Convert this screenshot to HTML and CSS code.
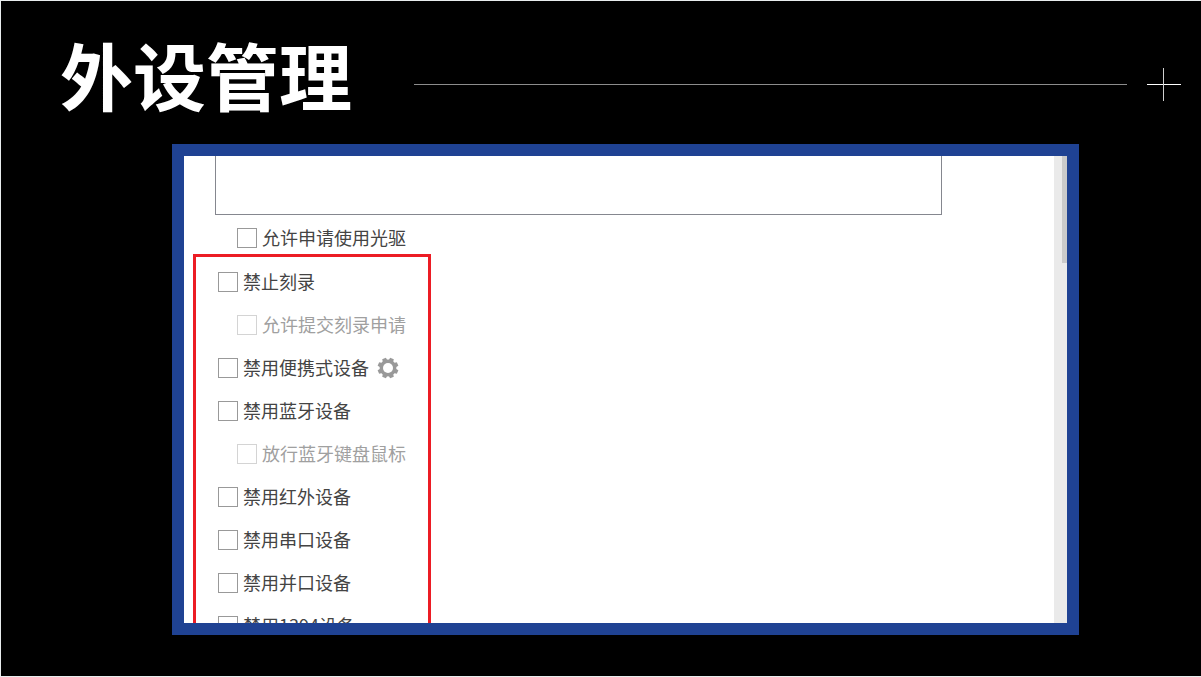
FILE: index.html
```html
<!DOCTYPE html>
<html lang="zh-CN">
<head>
  <meta charset="UTF-8" />
  <meta name="viewport" content="width=device-width, initial-scale=1.0"/>
  <title>外设管理</title>
  <link rel="stylesheet" href="styles.css">
</head>
<body>

  <header class="header">
    <h1>外设管理</h1>
    <div class="line"></div>
    <svg class="plus" viewBox="0 0 34 34" aria-hidden="true">
      <path d="M0 17.5H34" stroke="#fff"/>
      <path d="M16.5 1V34" stroke="#d0d0d0"/>
    </svg>
  </header>

  <main class="panel">
    <form class="settings">
      <textarea class="list-box" aria-label="列表"></textarea>

      <label class="option sub outside">
        <input type="checkbox"><span>允许申请使用光驱</span>
      </label>

      <div class="marked">
        <label class="option"><input type="checkbox"><span>禁止刻录</span></label>
        <label class="option sub"><input type="checkbox" disabled><span>允许提交刻录申请</span></label>
        <div class="option">
          <label class="option"><input type="checkbox"><span>禁用便携式设备</span></label>
          <button type="button" class="gear" aria-label="设置">
            <svg viewBox="0 0 22 22">
              <g fill="#999">
                <path d="M8.4 5 9 .6H13L13.6 5V17L13 21.4H9L8.4 17Z" transform="rotate(22.5 11 11)"/>
                <path d="M8.4 5 9 .6H13L13.6 5V17L13 21.4H9L8.4 17Z" transform="rotate(67.5 11 11)"/>
                <path d="M8.4 5 9 .6H13L13.6 5V17L13 21.4H9L8.4 17Z" transform="rotate(112.5 11 11)"/>
                <path d="M8.4 5 9 .6H13L13.6 5V17L13 21.4H9L8.4 17Z" transform="rotate(157.5 11 11)"/>
                <circle cx="11" cy="11" r="8.4"/>
              </g>
              <circle cx="11" cy="11" r="5" fill="#fff"/>
            </svg>
          </button>
        </div>
        <label class="option"><input type="checkbox"><span>禁用蓝牙设备</span></label>
        <label class="option sub"><input type="checkbox" disabled><span>放行蓝牙键盘鼠标</span></label>
        <label class="option"><input type="checkbox"><span>禁用红外设备</span></label>
        <label class="option"><input type="checkbox"><span>禁用串口设备</span></label>
        <label class="option"><input type="checkbox"><span>禁用并口设备</span></label>
        <label class="option"><input type="checkbox"><span>禁用1394设备</span></label>
      </div>
    </form>
    <div class="scrollbar"><div class="thumb"></div></div>
  </main>

</body>
</html>
```
FILE: styles.css
```css
* {
  box-sizing: border-box;
}
body {
  display: flex;
  flex-direction: column;
  height: 100vh;
  margin: 0;
  border: 1px solid #e8eced;
  border-right: none;
  background: #000;
  font-family: "Noto Sans CJK SC", sans-serif;
}
.header {
  display: flex;
  align-items: center;
  height: 143px;
  padding: 23px 20px 0 59px;
  flex-shrink: 0;
}
.header h1 {
  margin: 0 62px 22px 0;
  color: #fff;
  font-size: 73px;
  line-height: 80px;
}
.line {
  flex: 1;
  height: 1px;
  background: #8c8c8c;
}
.plus {
  width: 34px;
  height: 34px;
  margin-left: 20px;
}
.panel {
  display: flex;
  flex: 1;
  min-height: 0;
  margin: 0 122px 41px 171px;
  border: 12px solid #1f4293;
  background: #fff;
  overflow: hidden;
}
.settings {
  display: flex;
  flex: 1;
  flex-direction: column;
  align-items: flex-start;
  overflow: hidden;
}
.list-box {
  align-self: stretch;
  flex-shrink: 0;
  height: 59px;
  margin: 0 112px 0 31px;
  border: 1px solid #85878f;
  border-top: none;
  resize: none;
}
.option {
  display: flex;
  align-items: center;
  height: 20px;
  flex-shrink: 0;
  gap: 5px;
  color: #444;
  font-size: 18px;
  line-height: 20px;
}
.option span {
  padding-bottom: 2px;
}
.option input {
  appearance: none;
  width: 20px;
  height: 20px;
  margin: 0;
  border: 1px solid #999;
  background: #fff;
}
.option input:disabled {
  border-color: #d4d4d4;
}
.option input:disabled + span {
  color: #a0a0a0;
}
.sub {
  margin-left: 19px;
}
.outside {
  margin: 13px 0 6px 53px;
}
.marked {
  display: flex;
  flex-direction: column;
  align-items: flex-start;
  flex-shrink: 0;
  gap: 23px;
  width: 238px;
  margin-left: 9px;
  padding: 15px 0 15px 22px;
  border: 3px solid #ec1c24;
}
.gear {
  width: 22px;
  height: 22px;
  margin-left: 3px;
  padding: 0;
  border: none;
  background: none;
  cursor: pointer;
}
.gear svg {
  display: block;
}
.scrollbar {
  width: 13px;
  padding-left: 8px;
  background: #eaeaea;
}
.thumb {
  height: 107px;
  background: #cacaca;
}
```
